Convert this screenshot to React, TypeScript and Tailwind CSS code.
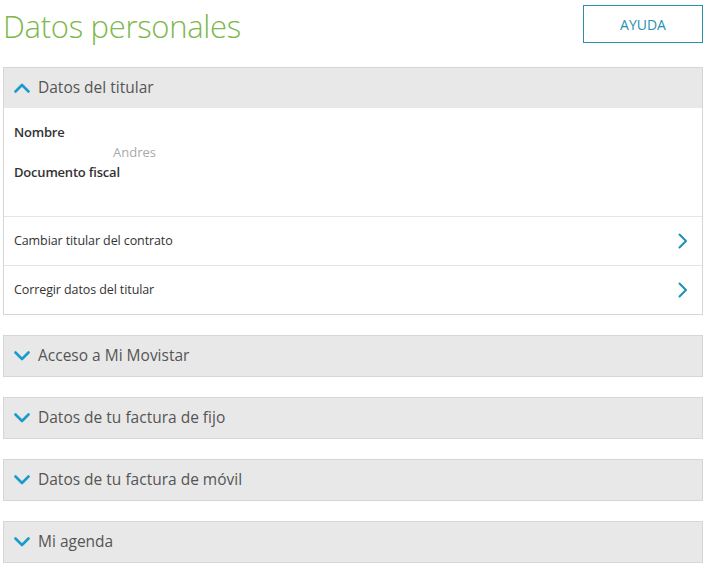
import React from "react";

const ChevronDown = () => (
  <svg width="16" height="10" viewBox="0 0 16 10" fill="none">
    <path d="M1.5 1.5 L8 8 L14.5 1.5" stroke="#1a9ccb" strokeWidth="2.6" strokeLinecap="round" strokeLinejoin="round" />
  </svg>
);
const ChevronUp = () => (
  <svg width="16" height="10" viewBox="0 0 16 10" fill="none">
    <path d="M1.5 8.5 L8 2 L14.5 8.5" stroke="#1a9ccb" strokeWidth="2.6" strokeLinecap="round" strokeLinejoin="round" />
  </svg>
);
const ChevronRight = () => (
  <svg width="10" height="16" viewBox="0 0 10 16" fill="none">
    <path d="M1.5 1.5 L8 8 L1.5 14.5" stroke="#1f8fb3" strokeWidth="2" strokeLinecap="round" strokeLinejoin="round" />
  </svg>
);

const Collapsed = ({ title }: { title: string }) => (
  <div className="h-[42px] border border-[#d6d6d6] bg-[#e8e8e8] flex items-center pl-[10px] gap-[8px]">
    <ChevronDown />
    <span className="text-[15.5px] text-[#555]">{title}</span>
  </div>
);

export default function App() {
  return (
    <div className="w-[707px] h-[569px] bg-white overflow-hidden" style={{ fontFamily: '"Open Sans", sans-serif' }}>
      <div className="flex justify-between items-start pl-[3px] pr-[4px] pt-[5px]">
        <h1 className="text-[31px] font-light text-[#7cb84a] leading-[40px] mt-[1px] tracking-[-0.3px]">Datos personales</h1>
        <button className="w-[120px] h-[38px] border border-[#2a8fa8] text-[#2a8fb0] text-[14px]">AYUDA</button>
      </div>
      <div className="px-[3px] pr-[4px] mt-[21px] flex flex-col gap-[20px]">
        <div className="border border-[#d6d6d6]">
          <div className="h-[40px] bg-[#e8e8e8] flex items-center pl-[10px] gap-[8px]">
            <ChevronUp />
            <span className="text-[15.5px] text-[#555]">Datos del titular</span>
          </div>
          <div className="h-[108px] pl-[10px] pt-[14px] text-[13px] leading-[20px] text-[#333]">
            <div className="font-semibold tracking-[-0.2px]">Nombre</div>
            <div className="pl-[99px] text-[#aaa] font-normal">Andres</div>
            <div className="font-semibold tracking-[-0.2px]">Documento fiscal</div>
          </div>
          <div className="h-[49px] border-t border-[#e5e5e5] flex items-center justify-between pl-[10px] pr-[14px]">
            <span className="text-[12.5px] tracking-[-0.1px] text-[#333]">Cambiar titular del contrato</span>
            <ChevronRight />
          </div>
          <div className="h-[49px] border-t border-[#e5e5e5] flex items-center justify-between pl-[10px] pr-[14px]">
            <span className="text-[12.5px] tracking-[-0.1px] text-[#333]">Corregir datos del titular</span>
            <ChevronRight />
          </div>
        </div>
        <Collapsed title="Acceso a Mi Movistar" />
        <Collapsed title="Datos de tu factura de fijo" />
        <Collapsed title="Datos de tu factura de móvil" />
        <Collapsed title="Mi agenda" />
      </div>
    </div>
  );
}
